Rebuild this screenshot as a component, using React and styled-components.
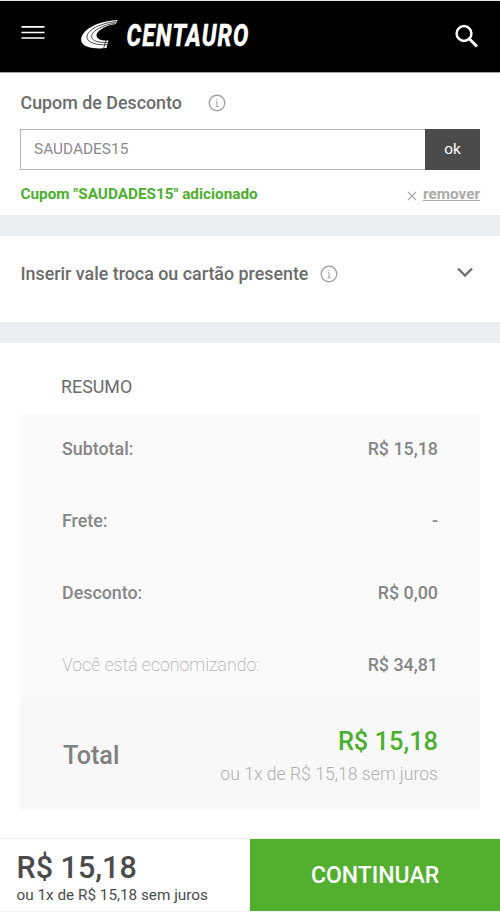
import React from 'react';
import styled, { createGlobalStyle } from 'styled-components';

const GlobalStyle = createGlobalStyle`
  * {
    box-sizing: border-box;
  }

  body {
    margin: 0;
    background: #fff;
    font-family: Roboto, "Liberation Sans", sans-serif;
    color: #6b6b6b;
  }
`;

const Page = styled.div`
  display: flex;
  flex-direction: column;
  width: 500px;
  height: 916px;
  overflow: hidden;
`;

const Header = styled.header`
  display: flex;
  align-items: flex-start;
  height: 73px;
  padding: 0 21px;
  background: #000;
  border-top: 1px solid #e3e8e8;
  border-bottom: 1px solid #a5a5a5;
`;

const IconButton = styled.button`
  display: flex;
  margin: ${(props) => props.$margin || '0'};
  padding: 0;
  border: 0;
  background: none;
  color: ${(props) => props.$color || '#fff'};
`;

const Logo = styled.svg`
  margin: 14px 0 0 34px;
  overflow: visible;
`;

const Wordmark = styled.text`
  font-family: Roboto, sans-serif;
  font-size: 31px;
  font-weight: 800;
  font-style: italic;
  letter-spacing: 1.5px;
  fill: #fff;
  stroke: #fff;
  stroke-width: 0.4px;
`;

const Coupon = styled.section`
  height: 142px;
  padding: 18px 20px 0;
`;

const TitleRow = styled.div`
  display: flex;
  align-items: center;
  gap: ${(props) => props.$gap};
`;

const Title = styled.h2`
  margin: 0;
  padding-left: 0.5px;
  font-size: 17.85px;
  font-weight: 500;
  line-height: 24px;
  white-space: nowrap;
`;

const CouponForm = styled.form`
  display: flex;
  height: 41px;
  margin-top: 14px;
`;

const Input = styled.input`
  flex: 1;
  min-width: 0;
  padding: 0 13px 2px;
  border: 1px solid #b5b5b5;
  border-right: 0;
  border-radius: 0;
  outline: none;
  font-family: inherit;
  font-size: 15.4px;
  color: #8a8a8a;
`;

const OkButton = styled.button`
  width: 55px;
  padding: 0 0 2px;
  border: 0;
  background: #4b4b4b;
  color: #fff;
  font-family: inherit;
  font-size: 15.4px;
`;

const CouponStatus = styled.div`
  display: flex;
  align-items: center;
  margin-top: 13px;
  padding-left: 0.5px;
  font-size: 15.3px;
  font-weight: 700;
  line-height: 22px;
`;

const Added = styled.span`
  flex: 1;
  color: #4caf2e;
`;

const Remove = styled.a`
  margin-left: 6px;
  color: #aaa;
  text-decoration: underline;
`;

const Strip = styled.div`
  height: 21px;
  background: #e8eef1;
`;

const GiftCard = styled.section`
  display: flex;
  align-items: flex-start;
  justify-content: space-between;
  height: 86px;
  padding: 26px 26px 0 20px;
`;

const Summary = styled.section`
  height: 495px;
  padding: 33px 20px 0;
`;

const SummaryTitle = styled.h3`
  margin: 0 0 16px 41px;
  font-size: 17.85px;
  font-weight: 400;
  line-height: 22px;
`;

const Row = styled.div`
  display: flex;
  align-items: center;
  justify-content: space-between;
  height: 72px;
  padding: 0 42px 3px;
  background: #fafafa;
  font-size: 17.85px;
  font-weight: 500;
  color: #868686;

  &:last-of-type {
    height: 70px;
    padding-bottom: 1px;
  }
`;

const Light = styled.span`
  font-size: ${(props) => props.$size || '17.6px'};
  font-weight: ${(props) => props.$weight || 300};
  color: #b0b0b0;
`;

const TotalRow = styled.footer`
  display: flex;
  align-items: center;
  justify-content: space-between;
  height: 110px;
  padding: 2px 42px 0 43px;
  background: #f8f8f8;
`;

const TotalLabel = styled.strong`
  padding-bottom: 2px;
  font-size: 25.2px;
  font-weight: 500;
  color: #808080;
`;

const TotalValue = styled.div`
  display: flex;
  flex-direction: column;
  align-items: flex-end;
  gap: 5px;
  padding-top: 2px;
  line-height: 28px;
`;

const Price = styled.strong`
  font-size: 25.4px;
  font-weight: 500;
  color: #4caf2e;
`;

const BottomBar = styled.footer`
  display: flex;
  height: 74px;
  border-top: 1px solid #eee;
  border-bottom: 1px solid #f1f1f1;
`;

const BottomPrice = styled.div`
  display: flex;
  flex-direction: column;
  width: 250px;
  padding: 13px 0 0 16.5px;
  color: #4b4b4b;
`;

const BigPrice = styled.strong`
  font-size: 30.5px;
  font-weight: 500;
  line-height: 32px;
`;

const Installments = styled.span`
  font-size: 15.3px;
  line-height: 23px;
`;

const ContinueButton = styled.button`
  flex: 1;
  height: 72px;
  padding: 0;
  border: 0;
  background: #52b02e;
  color: #fff;
  font-family: inherit;
  font-size: 23px;
  font-weight: 500;
`;

const InfoIcon = () => (
  <svg width="18" height="18" viewBox="0 0 18 18" fill="none" stroke="#a3a3a3">
    <circle cx="9" cy="9" r="7.8" strokeWidth="1.4" />
    <path d="M7.800 7.700H9V12.600M7.600 12.600H10.400M9 4.800V6" strokeWidth="1" />
  </svg>
);

const CentauroLogo = () => (
  <Logo width="172" height="40" viewBox="0 0 172 40">
    <path
      d="M38.500 5C25 6 13 9.500 6 16.500C0 23 1 29 8 31.500C14 33.800 21 33.800 27.500 33L29.500 25.500C23 26 18.500 24.500 17.500 21C17 17 23 13 29 10.800C33 9.500 35 9.300 37 9Z"
      fill="#fff"
    />
    <path
      d="M37.500 6.500C24 8 13 12.500 9 18.500C5 25.500 13 30.500 29 29.700M37.500 7.800C27 9.500 17 13.500 13.500 18.500C10 25 17 28 30 27.400M27 25L24.500 34"
      fill="none"
      stroke="#000"
      strokeWidth="0.7"
    />
    <Wordmark x="47.500" y="30.500" textLength="123" lengthAdjust="spacingAndGlyphs">CENTAURO</Wordmark>
  </Logo>
);

const rows = [
  { label: 'Subtotal:', value: 'R$ 15,18' },
  { label: 'Frete:', value: '-' },
  { label: 'Desconto:', value: 'R$ 0,00' },
  { label: 'Você está economizando:', value: 'R$ 34,81', light: true },
];

function App() {
  return (
    <Page>
      <GlobalStyle />
      <Header>
        <IconButton $margin="24px 0 0" aria-label="Menu">
          <svg width="24" height="16" viewBox="0 0 24 16" stroke="currentColor" strokeWidth="1.7">
            <path d="M0.500 1.800H23.500M0.500 7.500H23.500M0.500 13H23.500" />
          </svg>
        </IconButton>
        <CentauroLogo />
        <IconButton $margin="23px 0 0 auto" aria-label="Buscar">
          <svg width="25" height="25" viewBox="0 0 25 25" fill="none" stroke="currentColor">
            <circle cx="10" cy="9.500" r="7.400" strokeWidth="2.500" />
            <path d="M15.200 14.700L23 22.500" strokeWidth="3" />
          </svg>
        </IconButton>
      </Header>

      <Coupon>
        <TitleRow $gap="26.5px">
          <Title>Cupom de Desconto</Title>
          <InfoIcon />
        </TitleRow>
        <CouponForm>
          <Input type="text" defaultValue="SAUDADES15" aria-label="Cupom" />
          <OkButton type="button">ok</OkButton>
        </CouponForm>
        <CouponStatus>
          <Added>Cupom "SAUDADES15" adicionado</Added>
          <svg width="10" height="14" viewBox="0 0 10 14" stroke="#a5a5a5" strokeWidth="1.1">
            <path d="M1 5L9 13M9 5L1 13" />
          </svg>
          <Remove>remover</Remove>
        </CouponStatus>
      </Coupon>

      <Strip />

      <GiftCard>
        <TitleRow $gap="11.5px">
          <Title>Inserir vale troca ou cartão presente</Title>
          <InfoIcon />
        </TitleRow>
        <IconButton $margin="5px 0 0" $color="#6f6f6f" aria-label="Expandir">
          <svg width="18" height="12" viewBox="0 0 18 12" fill="none" stroke="currentColor" strokeWidth="2.3">
            <path d="M2 1.500L9 8.500L16 1.500" />
          </svg>
        </IconButton>
      </GiftCard>

      <Strip />

      <Summary>
        <SummaryTitle>RESUMO</SummaryTitle>
        {rows.map((row) => (
          <Row key={row.label}>
            {row.light ? (
              <Light $weight={200} $size="17.75px">{row.label}</Light>
            ) : (
              <span>{row.label}</span>
            )}
            <span>{row.value}</span>
          </Row>
        ))}
        <TotalRow>
          <TotalLabel>Total</TotalLabel>
          <TotalValue>
            <Price>R$ 15,18</Price>
            <Light>ou 1x de R$ 15,18 sem juros</Light>
          </TotalValue>
        </TotalRow>
      </Summary>

      <BottomBar>
        <BottomPrice>
          <BigPrice>R$ 15,18</BigPrice>
          <Installments>ou 1x de R$ 15,18 sem juros</Installments>
        </BottomPrice>
        <ContinueButton>CONTINUAR</ContinueButton>
      </BottomBar>
    </Page>
  );
}

export default App;
